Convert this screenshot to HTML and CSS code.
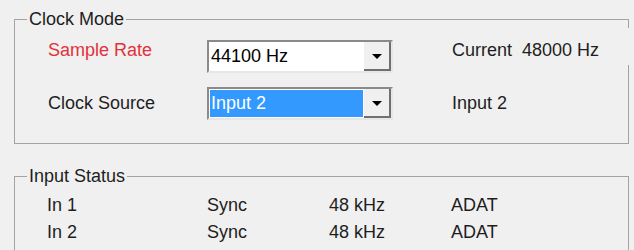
FILE: index.html
```html
<!DOCTYPE html>
<html>
<head>
<meta charset="utf-8">
<link rel="stylesheet" href="styles.css">
</head>
<body>
<fieldset class="group group-clock">
  <legend class="group-title">Clock Mode</legend>
  <div class="clock-grid">
    <div class="lbl lbl-r1 lbl-red">Sample Rate</div>
    <div class="combo">
      <div class="combo-field"><span class="combo-text">44100 Hz</span></div>
      <div class="combo-btn"><span class="arrow"></span></div>
    </div>
    <div class="lbl lbl-r1 lbl-info">Current&nbsp;&nbsp;48000 Hz<span class="border-cover"></span></div>

    <div class="lbl lbl-r2">Clock Source</div>
    <div class="combo">
      <div class="combo-field"><span class="combo-text combo-sel">Input 2</span></div>
      <div class="combo-btn"><span class="arrow"></span></div>
    </div>
    <div class="lbl lbl-r2 lbl-info">Input 2</div>
  </div>
</fieldset>

<fieldset class="group group-status">
  <legend class="group-title">Input Status</legend>
  <div class="status-grid">
    <div>In 1</div><div>Sync</div><div>48 kHz</div><div>ADAT</div>
    <div>In 2</div><div>Sync</div><div>48 kHz</div><div>ADAT</div>
  </div>
</fieldset>
</body>
</html>
```
FILE: styles.css
```css
html, body {
  margin: 0;
  padding: 0;
  background: #f0f0f0;
  overflow: hidden;
}
body {
  width: 634px;
  height: 250px;
  font-family: "Liberation Sans", Arial, sans-serif;
  font-size: 18px;
  color: #1e1e1e;
}
.group {
  box-sizing: border-box;
  width: 615px;
  margin: 9px 0 0 14px;
  border: 1px solid #a3a3a3;
  padding: 10px 0 23px 0;
  min-width: 0;
}
.group-status {
  margin-top: 22px;
  padding: 5px 0 40px 0;
}
.group-title {
  font-size: 18px;
  line-height: 21px;
  padding: 0 2px;
  margin-left: 12px;
}
.clock-grid {
  display: grid;
  grid-template-columns: 159px 186px auto;
  grid-auto-rows: 33px;
  row-gap: 14px;
  margin-left: 33px;
}
.lbl {
  line-height: 21px;
  white-space: nowrap;
}
.lbl-r1 { margin-top: 0; }
.lbl-r2 { margin-top: 6px; }
.lbl-red { color: #e2323c; }
.lbl-info {
  margin-left: 59px;
  position: relative;
}
.border-cover {
  position: absolute;
  left: 174px;
  top: -12px;
  width: 6px;
  height: 37px;
  background: #f0f0f0;
}
.combo {
  box-sizing: border-box;
  display: flex;
  height: 33px;
  border-style: solid;
  border-width: 2px;
  border-color: #8a8a8a #e6e6e6 #e6e6e6 #8a8a8a;
  background: #fff;
}
.combo-field {
  flex: 1;
  display: flex;
  padding: 1px;
}
.combo-text {
  flex: 1;
  line-height: 27px;
  padding-left: 1px;
  color: #000;
}
.combo-sel {
  background: #3399ff;
  color: #fff;
}
.combo-btn {
  box-sizing: border-box;
  width: 27px;
  background: #f0f0f0;
  border-right: 2px solid #707070;
  border-bottom: 2px solid #707070;
  display: flex;
  align-items: center;
  justify-content: center;
}
.arrow {
  width: 0;
  height: 0;
  border-left: 5px solid transparent;
  border-right: 5px solid transparent;
  border-top: 5px solid #000;
  margin-top: 2px;
}
.status-grid {
  display: grid;
  grid-template-columns: 160px 122px 122px auto;
  grid-auto-rows: 27px;
  line-height: 27px;
  margin-left: 32px;
}
```
